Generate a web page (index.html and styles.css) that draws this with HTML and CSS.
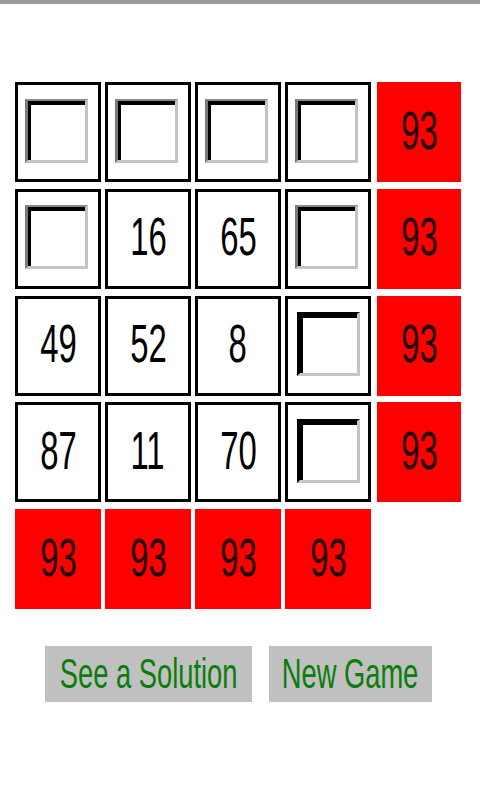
FILE: index.html
```html
<!DOCTYPE html>
<html>
<head>
<meta charset="utf-8">
<link rel="stylesheet" href="styles.css">
</head>
<body>
<div class="topbar"></div>
<div class="board">
  <div class="cell"><span class="slot"></span></div>
  <div class="cell"><span class="slot"></span></div>
  <div class="cell"><span class="slot"></span></div>
  <div class="cell"><span class="slot"></span></div>
  <div class="sum side"><span class="num">93</span></div>

  <div class="cell"><span class="slot"></span></div>
  <div class="cell"><span class="num">16</span></div>
  <div class="cell"><span class="num">65</span></div>
  <div class="cell"><span class="slot"></span></div>
  <div class="sum side"><span class="num">93</span></div>

  <div class="cell"><span class="num">49</span></div>
  <div class="cell"><span class="num">52</span></div>
  <div class="cell"><span class="num">8</span></div>
  <div class="cell"><span class="slot dark"></span></div>
  <div class="sum side"><span class="num">93</span></div>

  <div class="cell"><span class="num">87</span></div>
  <div class="cell"><span class="num">11</span></div>
  <div class="cell"><span class="num">70</span></div>
  <div class="cell"><span class="slot dark"></span></div>
  <div class="sum side"><span class="num">93</span></div>

  <div class="sum"><span class="num">93</span></div>
  <div class="sum"><span class="num">93</span></div>
  <div class="sum"><span class="num">93</span></div>
  <div class="sum"><span class="num">93</span></div>
  <div class="blank"></div>
</div>
<div class="actions">
  <div class="btn btn-solution"><span class="label">See a Solution</span></div>
  <div class="btn btn-new"><span class="label">New Game</span></div>
</div>
</body>
</html>
```

FILE: styles.css
```css
html, body {
  margin: 0;
  padding: 0;
  background: #ffffff;
  font-family: "Liberation Sans", Arial, sans-serif;
}

.topbar {
  height: 4px;
  background: #9c9c9c;
}

.board {
  display: grid;
  grid-template-columns: 86px 86px 86px 86px 86px;
  grid-template-rows: repeat(5, 100px);
  column-gap: 4px;
  row-gap: 6.75px;
  margin-top: 78px;
  padding-left: 15px;
}

.cell {
  box-sizing: border-box;
  border: 3px solid #000;
  background: #fff;
  display: flex;
  align-items: center;
  justify-content: center;
}

.sum {
  background: #ff0000;
  display: flex;
  align-items: center;
  justify-content: center;
}

.sum .num {
  color: #1e0000;
}

.side {
  width: 84px;
  justify-self: end;
}

.num {
  display: inline-block;
  font-size: 53px;
  line-height: 1;
  color: #000;
  transform: scaleX(0.62);
  padding-bottom: 4px;
}

.slot {
  box-sizing: border-box;
  width: 63px;
  height: 64px;
  margin: 0 4px 3px 0;
  background: #fff;
  border-style: solid;
  border-width: 2px 3px 3px 3px;
  border-color: #8a8a8a #c4c4c4 #c4c4c4 #7a7a7a;
  box-shadow: inset 3px 4px 0 #000;
}

.slot.dark {
  border-color: #000 #c4c4c4 #c4c4c4 #000;
  margin: 0 0 3px 0;
}

.actions {
  display: flex;
  justify-content: center;
  gap: 17px;
  margin-top: 37px;
  padding-right: 3px;
}

.btn {
  height: 56px;
  background: #c0c0c0;
  display: flex;
  align-items: center;
  justify-content: center;
  overflow: visible;
}

.btn-solution {
  width: 207px;
}

.btn-new {
  width: 163px;
}

.label {
  display: inline-block;
  white-space: nowrap;
  font-size: 42px;
  line-height: 1;
  color: #0a7d0a;
  transform: scaleX(0.65);
}
```
